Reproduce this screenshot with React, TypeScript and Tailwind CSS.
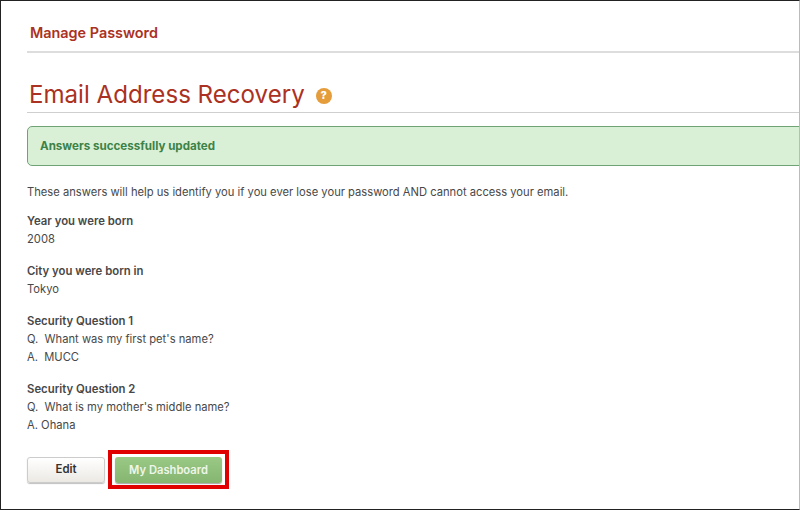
export default function App() {
  return (
    <div className="h-[510px] w-[800px] overflow-hidden border border-[#222222] border-r-[#bbbbbb] bg-white pl-[26px] font-['Inter',sans-serif] text-[11.2px] text-[#484848]">
      {/* Section tab */}
      <div className="mt-[23px] h-[29px] border-b-2 border-[#dddddd] pl-[3px] text-[14.4px] leading-[18px] font-semibold text-[#ab3122]">
        Manage Password
      </div>

      {/* Heading */}
      <div className="mt-[22px] flex h-[38px] items-center gap-[11px] border-b border-[#cfcfcf] pt-[2px] pl-[2px]">
        <h1 className="text-[24.1px] leading-[34px] font-normal text-[#ab3122]">Email Address Recovery</h1>
        <span className="mt-[2px] flex h-[16px] w-[16px] items-center justify-center rounded-full bg-[#e59c3a] text-[11px] leading-none font-extrabold text-white">
          ?
        </span>
      </div>

      {/* Alert */}
      <div className="mt-[13px] -mr-[10px] flex h-[40px] items-center rounded-[5px] border border-[#6fa376] bg-[#d9f0d7] pt-[1px] pl-[12px] text-[11.6px] font-bold text-[#3d8246]">
        Answers successfully updated
      </div>

      <p className="mt-[17px] leading-[18px]">
        These answers will help us identify you if you ever lose your password AND cannot access your email.
      </p>

      <div className="mt-[11px] leading-[18px]">
        <div className="text-[11.35px] font-semibold">Year you were born</div>
        <div>2008</div>
      </div>

      <div className="mt-[14px] leading-[18px]">
        <div className="text-[11.35px] font-semibold">City you were born in</div>
        <div>Tokyo</div>
      </div>

      <div className="mt-[14px] leading-[18px]">
        <div className="text-[11.35px] font-semibold">Security Question 1</div>
        <div className="whitespace-pre">Q.  Whant was my first pet's name?</div>
        <div className="whitespace-pre">A.  MUCC</div>
      </div>

      <div className="mt-[14px] leading-[18px]">
        <div className="text-[11.35px] font-semibold">Security Question 2</div>
        <div className="whitespace-pre">Q.  What is my mother's middle name?</div>
        <div>A. Ohana</div>
      </div>

      {/* Actions */}
      <div className="mt-[16px] flex items-start gap-[3px]">
        <button className="mt-[7px] h-[26px] w-[78px] rounded-[3px] border border-[#cccccc] bg-gradient-to-b from-white to-[#ece9e4] text-[11.4px] font-semibold text-[#333333] shadow-[0_1px_1px_rgba(0,0,0,0.25)]">
          Edit
        </button>
        <div className="border-[4px] border-[#e00000] px-[3px] pt-[3px] pb-[2px]">
          <button className="block h-[26px] w-[107px] rounded-[3px] bg-gradient-to-b from-[#9ac885] to-[#86b572] text-[11.2px] font-semibold text-[#eef6ea] shadow-[0_1px_1px_rgba(0,0,0,0.35)]">
            My Dashboard
          </button>
        </div>
      </div>
    </div>
  );
}
